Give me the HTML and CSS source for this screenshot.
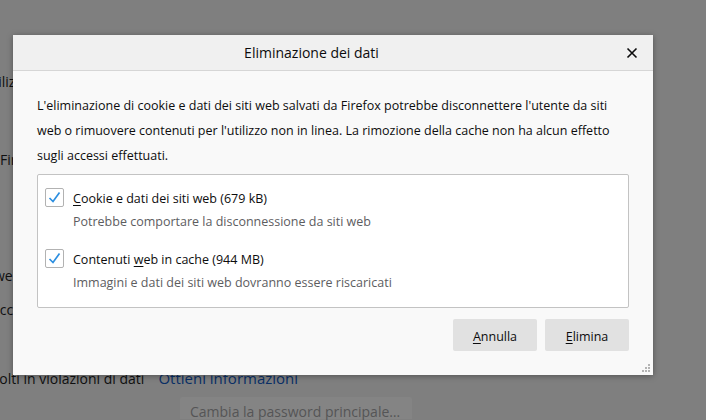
FILE: index.html
```
<!DOCTYPE html>
<html lang="it">
<head>
<meta charset="utf-8">
<title>Eliminazione dei dati</title>
<link rel="stylesheet" href="styles.css">
</head>
<body>
<div class="page">
  <div class="bg-row r1">Utilizzo</div>
  <div class="bg-row r2">Firefox</div>
  <div class="bg-row r3">web</div>
  <div class="bg-row r4">accessi</div>
  <div class="bg-row r5"><span>Coinvolti in violazioni di dati</span><span class="bg-link">Ottieni informazioni</span></div>
  <div class="bg-btn-row"><span class="bg-btn">Cambia la password principale…</span></div>
</div>

<div class="dialog">
  <div class="dlg-head">
    <div class="dlg-title">Eliminazione dei dati</div>
    <div class="dlg-close">
      <svg width="12" height="12" viewBox="0 0 12 12"><path d="M1.5 1.5 L10.5 10.5 M10.5 1.5 L1.5 10.5" stroke="#0c0c0d" stroke-width="1.6" fill="none"/></svg>
    </div>
  </div>
  <div class="dlg-body">
    <p class="intro">L'eliminazione di cookie e dati dei siti web salvati da Firefox potrebbe disconnettere l'utente da siti web o rimuovere contenuti per l'utilizzo non in linea. La rimozione della cache non ha alcun effetto sugli accessi effettuati.</p>
    <div class="group">
      <div class="item">
        <span class="cb"><svg width="17" height="17" viewBox="0 0 17 17"><path d="M3.5 9 L7 12.5 L13.5 3.5" stroke="#2d8fe0" stroke-width="1.7" fill="none"/></svg></span>
        <span class="label"><u>C</u>ookie e dati dei siti web (679 kB)</span>
        <span class="desc">Potrebbe comportare la disconnessione da siti web</span>
      </div>
      <div class="item">
        <span class="cb"><svg width="17" height="17" viewBox="0 0 17 17"><path d="M3.5 9 L7 12.5 L13.5 3.5" stroke="#2d8fe0" stroke-width="1.7" fill="none"/></svg></span>
        <span class="label">Contenuti <u>w</u>eb in cache (944 MB)</span>
        <span class="desc">Immagini e dati dei siti web dovranno essere riscaricati</span>
      </div>
    </div>
    <div class="buttons">
      <button class="btn"><u>A</u>nnulla</button>
      <button class="btn"><u>E</u>limina</button>
    </div>
  </div>
  <svg class="grip" width="9" height="9" viewBox="0 0 9 9" fill="#b4b4b4">
    <rect x="6" y="0" width="2" height="2"/>
    <rect x="3" y="3" width="2" height="2"/><rect x="6" y="3" width="2" height="2"/>
    <rect x="0" y="6" width="2" height="2"/><rect x="3" y="6" width="2" height="2"/><rect x="6" y="6" width="2" height="2"/>
  </svg>
</div>
</body>
</html>
```
FILE: styles.css
```
html, body {
  margin: 0;
  height: 100%;
}
body {
  background: #7f7f7f;
  font-family: "Open Sans", "Liberation Sans", Arial, sans-serif;
  color: #0d0d0e;
  overflow: hidden;
  position: relative;
}

/* background settings page (dimmed) */
.page {
  display: flex;
  flex-direction: column;
  font-size: 14px;
  color: #0f0f10;
}
.bg-row {
  height: 18px;
  line-height: 18px;
  white-space: nowrap;
}
.r1 { margin-top: 73px; margin-left: -17px; }
.r2 { margin-top: 60px; margin-left: 0; }
.r3 { margin-top: 98px; margin-left: -6px; }
.r4 { margin-top: 16px; margin-left: -8px; }
.r5 { margin-top: 50px; margin-left: -37px; display: flex; align-items: baseline; gap: 14px; }
.bg-link { color: #0a2f66; font-size: 15px; }
.bg-btn-row { padding-left: 180px; margin-top: 10px; height: 22px; }
.bg-btn {
  display: inline-block;
  width: 232px;
  height: 22px;
  padding: 4px 0 0 10px;
  line-height: 22px;
  box-sizing: border-box;
  background: #848484;
  color: #555556;
  border-radius: 2px 2px 0 0;
  white-space: nowrap;
}

/* dialog */
.dialog {
  position: absolute;
  left: 13px;
  top: 35px;
  width: 640px;
  height: 340px;
  background: #f9f9f9;
  box-shadow: 0 1px 6px rgba(0, 0, 0, 0.35);
  display: flex;
  flex-direction: column;
}
.dlg-head {
  height: 35px;
  background: #f0f0f0;
  border-bottom: 1px solid #d6d6d6;
  display: flex;
  align-items: center;
}
.dlg-title {
  flex: 1;
  text-align: center;
  font-size: 14px;
  color: #0c0c0d;
}
.dlg-close {
  width: 43px;
  display: flex;
  justify-content: center;
  align-items: center;
}
.dlg-body {
  padding: 22px 24px 0 24px;
  font-size: 12.5px;
}
.intro {
  margin: 0;
  line-height: 25px;
}
.group {
  margin-top: 6px;
  background: #fff;
  border: 1px solid #c3c3c3;
  border-radius: 2px;
  padding: 13px 8px 14px 7px;
  display: flex;
  flex-direction: column;
  gap: 17px;
}
.item {
  display: grid;
  grid-template-columns: 19px 1fr;
  column-gap: 9px;
  row-gap: 3px;
}
.cb {
  width: 19px;
  height: 19px;
  box-sizing: border-box;
  border: 1px solid #b2b2b2;
  border-radius: 2px;
  background: #fff;
  display: flex;
  align-items: center;
  justify-content: center;
}
.label {
  line-height: 20px;
  padding-top: 1px;
}
.desc {
  grid-column: 2;
  line-height: 20px;
  color: #5d5d5f;
}
u { text-decoration-thickness: 1px; text-underline-offset: 2px; }
.buttons {
  margin-top: 11px;
  display: flex;
  justify-content: flex-end;
  gap: 8px;
}
.btn {
  width: 84px;
  height: 32px;
  border: none;
  border-radius: 2px;
  background: #e1e1e1;
  font-family: "Open Sans", "Liberation Sans", Arial, sans-serif;
  font-size: 12.5px;
  color: #0c0c0d;
  padding: 2px 0 0;
}
.grip {
  position: absolute;
  right: 2px;
  bottom: 2px;
}
```
